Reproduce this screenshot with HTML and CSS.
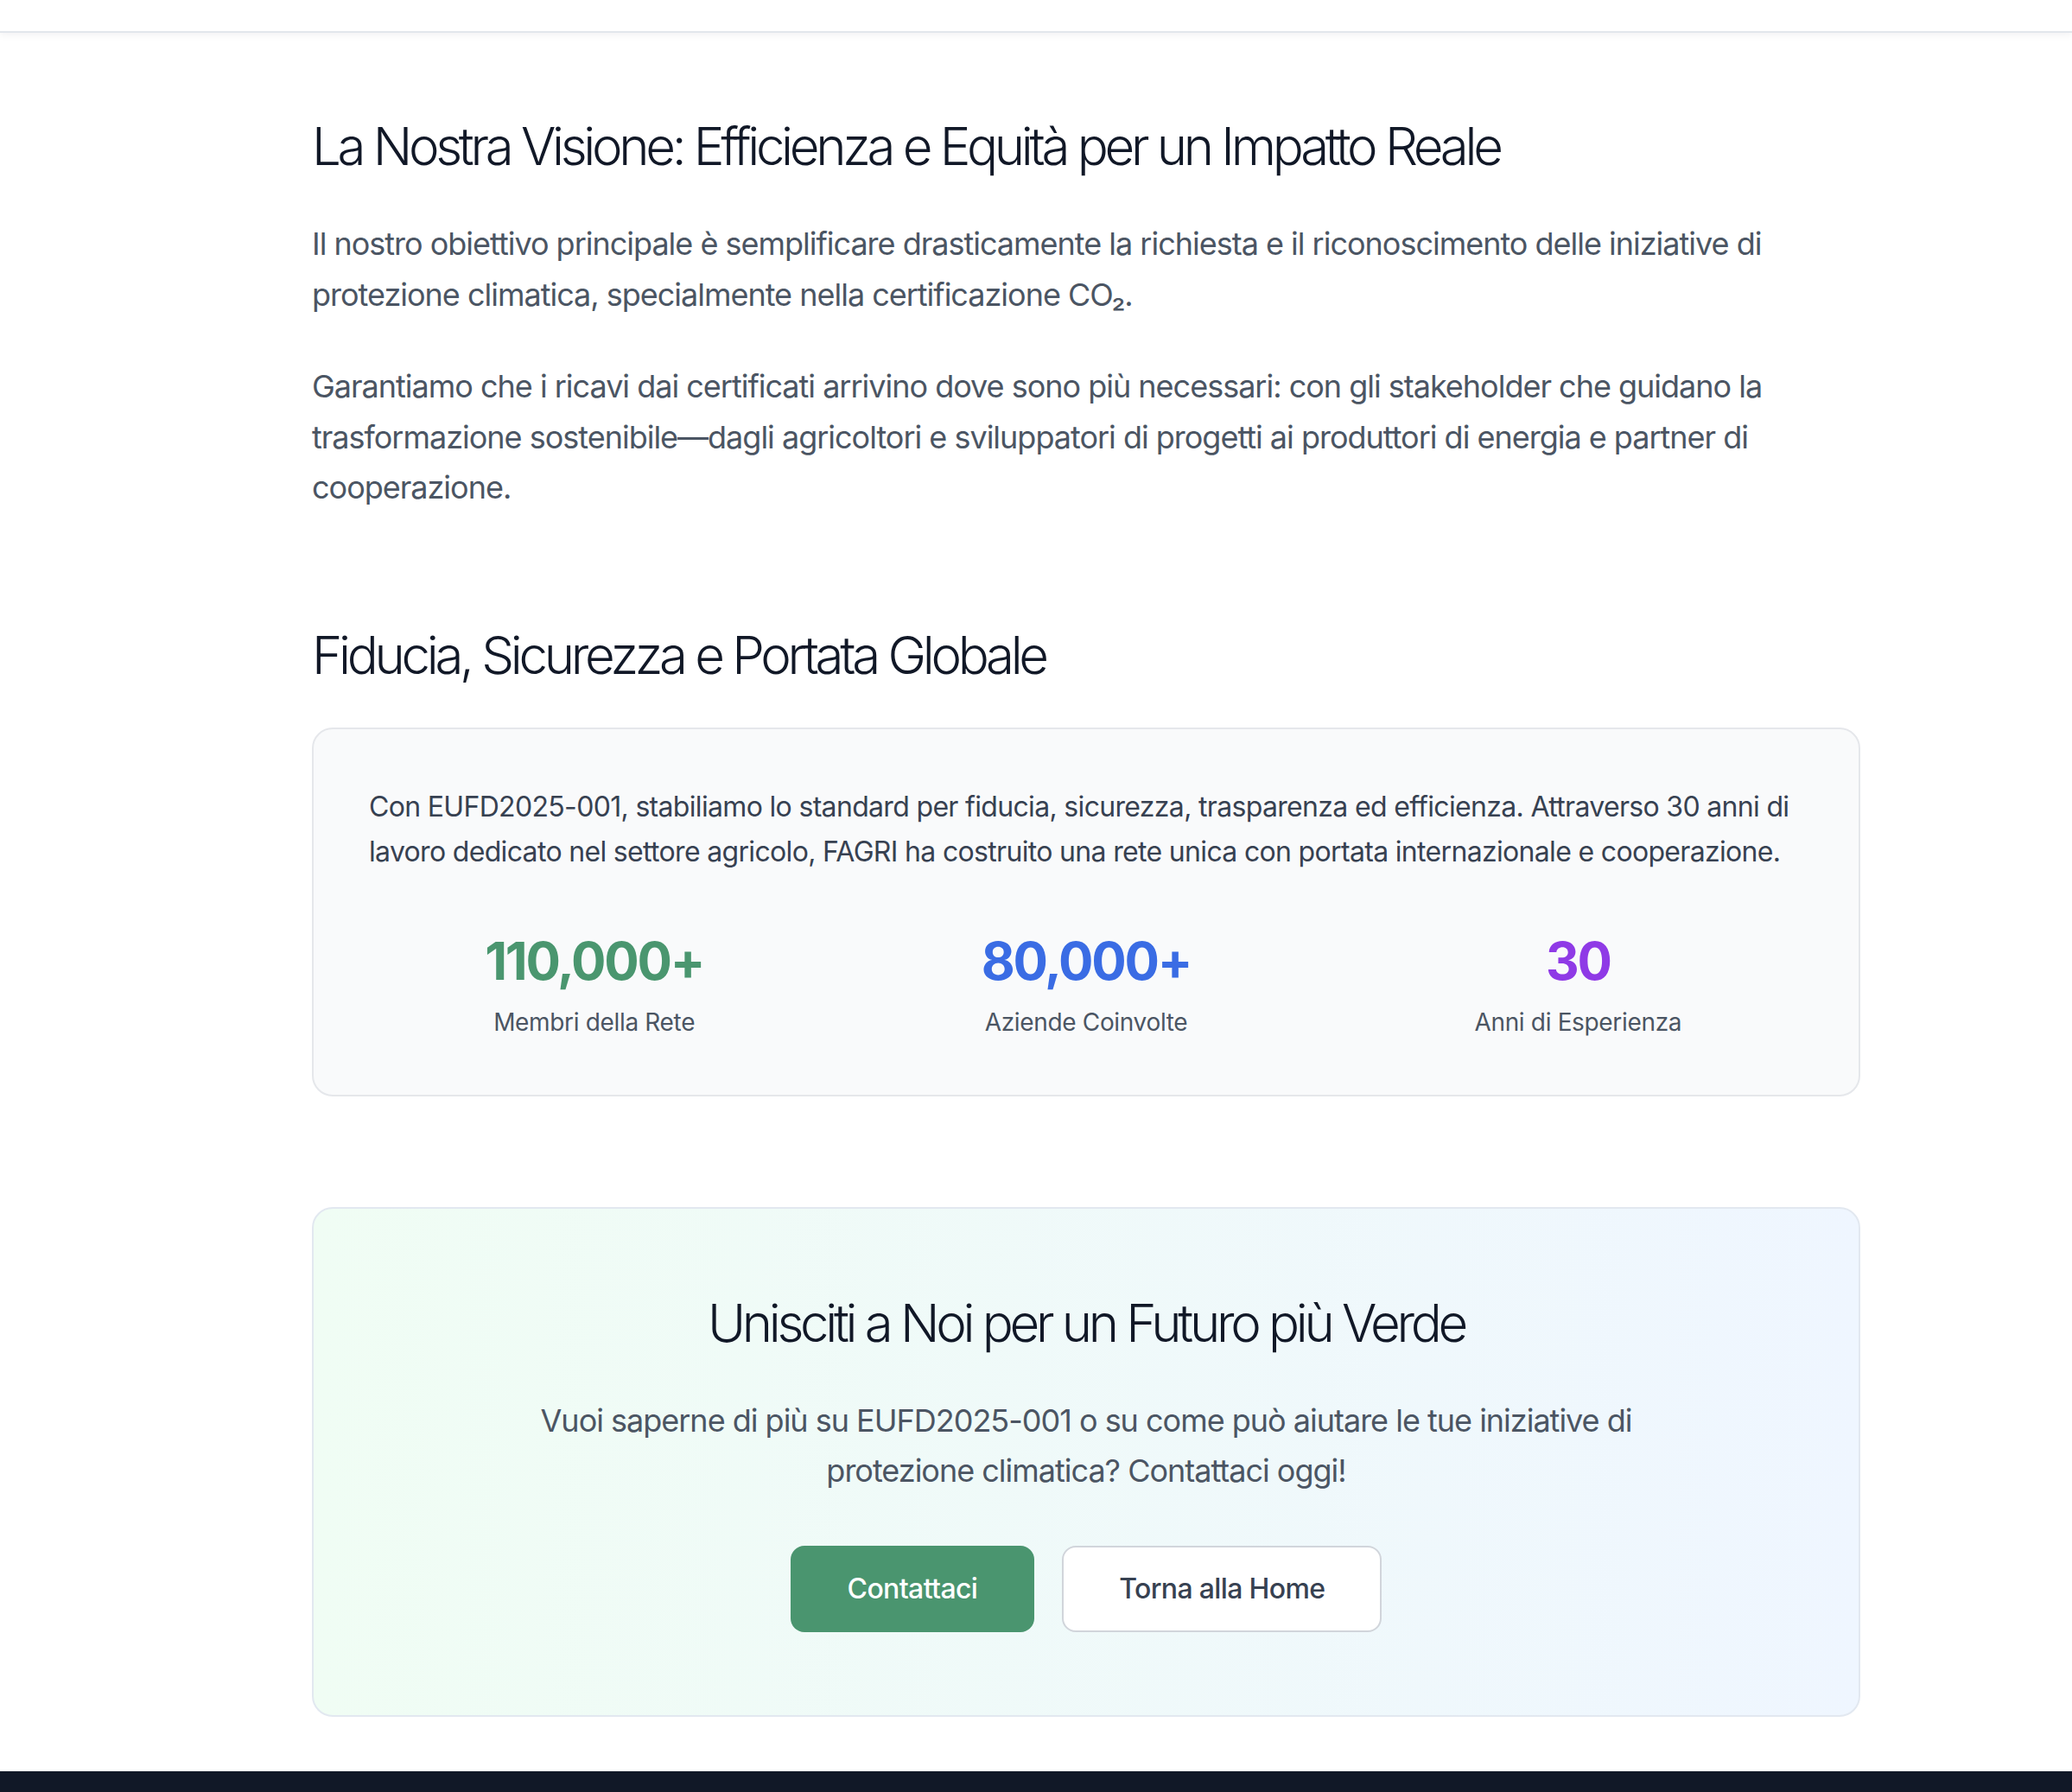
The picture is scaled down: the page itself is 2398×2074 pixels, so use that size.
FILE: index.html
```html
<!DOCTYPE html>
<html lang="it">
<head>
<meta charset="utf-8">
<title>La Nostra Visione</title>
<link rel="stylesheet" href="styles.css">
</head>
<body>
<header class="topbar"></header>
<main class="page">
  <div class="container">
    <section class="section">
      <h1 class="title">La Nostra Visione: Efficienza e Equità per un Impatto Reale</h1>
      <p class="lead">Il nostro obiettivo principale è semplificare drasticamente la richiesta e il riconoscimento delle iniziative di protezione climatica, specialmente nella certificazione CO₂.</p>
      <p class="lead">Garantiamo che i ricavi dai certificati arrivino dove sono più necessari: con gli stakeholder che guidano la trasformazione sostenibile—dagli agricoltori e sviluppatori di progetti ai produttori di energia e partner di cooperazione.</p>
    </section>
    <section class="section">
      <h2 class="title">Fiducia, Sicurezza e Portata Globale</h2>
      <div class="card">
        <p class="card-text">Con EUFD2025-001, stabiliamo lo standard per fiducia, sicurezza, trasparenza ed efficienza. Attraverso 30 anni di lavoro dedicato nel settore agricolo, FAGRI ha costruito una rete unica con portata internazionale e cooperazione.</p>
        <div class="stats">
          <div class="stat">
            <div class="stat-num green">110,000+</div>
            <div class="stat-label">Membri della Rete</div>
          </div>
          <div class="stat">
            <div class="stat-num blue">80,000+</div>
            <div class="stat-label">Aziende Coinvolte</div>
          </div>
          <div class="stat">
            <div class="stat-num purple">30</div>
            <div class="stat-label">Anni di Esperienza</div>
          </div>
        </div>
      </div>
    </section>
    <section class="cta">
      <h2 class="title cta-title">Unisciti a Noi per un Futuro più Verde</h2>
      <p class="lead cta-text">Vuoi saperne di più su EUFD2025-001 o su come può aiutare le tue iniziative di protezione climatica? Contattaci oggi!</p>
      <div class="actions">
        <a class="btn btn-primary" href="#">Contattaci</a>
        <a class="btn btn-outline" href="#">Torna alla Home</a>
      </div>
    </section>
  </div>
</main>
<footer class="footer"></footer>
</body>
</html>
```
FILE: styles.css
```css
* { box-sizing: border-box; }
html, body { margin: 0; padding: 0; }
body {
  font-family: Inter, "Noto Sans", "Liberation Sans", sans-serif;
  background: #ffffff;
  color: #111827;
}
.topbar {
  height: 38px;
  background: #ffffff;
  border-bottom: 2px solid #e2e6ec;
  box-shadow: 0 3px 8px rgba(15, 23, 42, 0.05);
  position: relative;
  z-index: 1;
}
.page {
  padding: 95px 0 63px 0;
}
.container {
  width: 1792px;
  margin-left: 361px;
}
.section {
  margin-bottom: 128px;
}
.title {
  font-size: 60px;
  line-height: 72px;
  font-weight: 300;
  letter-spacing: -0.072em;
  color: #111827;
  margin: 0 0 48px 0;
}
.lead {
  font-size: 36px;
  line-height: 58.5px;
  letter-spacing: -0.028em;
  color: #4b5563;
  margin: 0 0 48px 0;
}
.section .lead:last-child { margin-bottom: 0; }
.card {
  background: #f9fafb;
  border: 2px solid #e5e7eb;
  border-radius: 24px;
  padding: 64px;
}
.card-text {
  font-size: 32px;
  line-height: 52px;
  letter-spacing: -0.021em;
  color: #374151;
  margin: 0 0 64px 0;
}
.stats {
  display: grid;
  grid-template-columns: repeat(3, 1fr);
  gap: 48px;
  text-align: center;
}
.stat-num {
  font-size: 60px;
  line-height: 72px;
  font-weight: 700;
  letter-spacing: -0.037em;
}
.stat-num.green { color: #4a966f; }
.stat-num.blue { color: #3a6ce4; }
.stat-num.purple { color: #8f3ae6; }
.stat-label {
  margin-top: 15px;
  font-size: 28px;
  line-height: 40px;
  letter-spacing: -0.012em;
  color: #4b5563;
}
.cta {
  background: linear-gradient(to right, #f0fdf4, #eff6ff);
  border: 2px solid #e2e8f0;
  border-radius: 24px;
  padding: 96px;
  text-align: center;
}
.cta-title { margin-bottom: 48px; }
.cta-text {
  max-width: 1344px;
  margin: 0 auto 57px auto;
}
.actions {
  display: flex;
  justify-content: center;
  gap: 32px;
}
.btn {
  display: inline-block;
  font-size: 32px;
  line-height: 48px;
  font-weight: 500;
  letter-spacing: -0.02em;
  padding: 24px 64px;
  border-radius: 16px;
  text-decoration: none;
  border: 2px solid transparent;
}
.btn-primary {
  background: #4a956f;
  color: #ffffff;
}
.btn-outline {
  background: #ffffff;
  color: #374151;
  border-color: #d1d5db;
}
.footer {
  background: #111827;
  height: 200px;
}
```
